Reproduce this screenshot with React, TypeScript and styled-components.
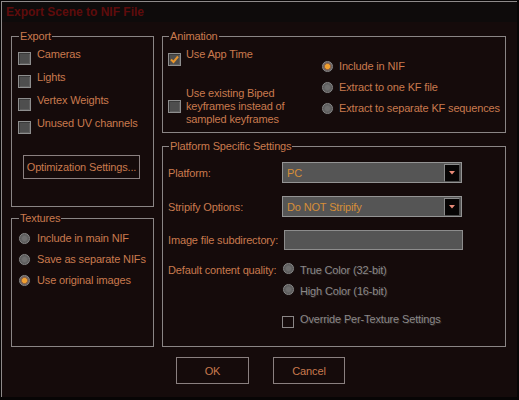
import React from "react";
import styled, { createGlobalStyle, css } from "styled-components";

const GlobalStyle = createGlobalStyle`
  html, body { margin: 0; padding: 0; background: #070505; }
  body { font-family: "Liberation Sans", Arial, sans-serif; font-size: 11px; }
`;

const TEXT = "#c97a4e";
const LINE = "#8a8585";

const Window = styled.div`
  width: 515px;
  height: 395px;
  margin: 1px 0 0 1px;
  border-top: 1px solid #8e8a8a;
  border-left: 1px solid #8e8a8a;
  background: #150b0b;
  display: flex;
  flex-direction: column;
`;

const TitleBar = styled.div`
  height: 20px;
  background: #0e0b0b;
  display: flex;
  align-items: center;
  padding-left: 4px;
  font-weight: bold;
  font-size: 12px;
  color: #5e0c0c;
`;

const Body = styled.div`
  display: flex;
  gap: 8px;
  padding: 8px 0 0 9px;
`;

const Column = styled.div<{ $w: number; $gap: number }>`
  width: ${(p) => p.$w}px;
  display: flex;
  flex-direction: column;
  gap: ${(p) => p.$gap}px;
`;

const Group = styled.fieldset<{ $h: number; $pt: number; $pl: number }>`
  box-sizing: border-box;
  height: ${(p) => p.$h}px;
  margin: 0;
  padding: ${(p) => p.$pt}px 0 0 ${(p) => p.$pl}px;
  border: 1px solid ${LINE};
  min-width: 0;
`;

const Legend = styled.legend`
  margin-left: 1px;
  padding: 0 1px;
  line-height: 13px;
  height: 13px;
  color: ${TEXT};
  letter-spacing: -0.15px;
`;

const Text = styled.span<{ $disabled?: boolean }>`
  line-height: 14px;
  color: ${(p) => (p.$disabled ? "#8c8888" : TEXT)};
  letter-spacing: -0.15px;
  white-space: nowrap;
  ${(p) =>
    p.$disabled &&
    css`
      text-shadow: 1px 1px 0 #2c2626;
    `}
`;

const MultiText = styled.span`
  line-height: 13px;
  color: ${TEXT};
  letter-spacing: -0.15px;
`;

const CheckRow = styled.div<{ $h?: number; $gap?: number; $mt?: number }>`
  display: flex;
  align-items: flex-start;
  height: ${(p) => (p.$h ? `${p.$h}px` : "auto")};
  gap: ${(p) => p.$gap ?? 6}px;
  margin-top: ${(p) => p.$mt ?? 0}px;
`;

const CenterRow = styled.div<{ $mt?: number }>`
  display: flex;
  align-items: center;
  gap: 5px;
  margin-top: ${(p) => p.$mt ?? 0}px;
`;

const Box = styled.div<{ $mt?: number; $outline?: boolean; $size?: number }>`
  box-sizing: border-box;
  flex: none;
  width: ${(p) => p.$size ?? 13}px;
  height: ${(p) => p.$size ?? 13}px;
  margin-top: ${(p) => p.$mt ?? 0}px;
  display: flex;
  align-items: center;
  justify-content: center;
  ${(p) =>
    p.$outline
      ? css`
          border: 1px solid #8a8686;
          background: transparent;
        `
      : css`
          border: 1px solid #8e8e8e;
          background: #4e4e4e;
          box-shadow: inset 1px 1px 0 #3a3a3a, inset -1px -1px 0 #5e5e5e;
        `}
`;

const RadioDot = styled.div<{ $on?: boolean; $mt?: number; $ml?: number }>`
  box-sizing: border-box;
  flex: none;
  width: 11px;
  height: 11px;
  border-radius: 50%;
  margin-top: ${(p) => p.$mt ?? 0}px;
  margin-left: ${(p) => p.$ml ?? 0}px;
  border: 1px solid #8a8a8a;
  background: ${(p) =>
    p.$on
      ? "radial-gradient(circle, #f0a030 0 2.2px, #a06a3a 2.8px, #6a6060 4px)"
      : "radial-gradient(circle, #6e6e6e 0 2px, #5a5a5a 4px)"};
  box-shadow: 0 0 1px #3a3a3a;
`;

const Rows = styled.div<{ $rowH: number }>`
  display: flex;
  flex-direction: column;
  & > * {
    height: ${(p) => p.$rowH}px;
  }
`;

const WinButton = styled.div<{ $w: number; $h: number; $ml?: number; $mt?: number }>`
  box-sizing: border-box;
  width: ${(p) => p.$w}px;
  height: ${(p) => p.$h}px;
  margin-left: ${(p) => p.$ml ?? 0}px;
  margin-top: ${(p) => p.$mt ?? 0}px;
  border: 1px solid #8a8080;
  display: flex;
  align-items: center;
  justify-content: center;
  color: ${TEXT};
  letter-spacing: -0.15px;
  white-space: nowrap;
`;

const AnimGrid = styled.div`
  display: grid;
  grid-template-columns: 154px 1fr;
`;

const LeftStack = styled.div`
  display: flex;
  flex-direction: column;
`;

const RightStack = styled.div`
  display: flex;
  flex-direction: column;
  padding-top: 12px;
`;

const FormRow = styled.div<{ $h?: number; $mt?: number; $align?: string }>`
  display: flex;
  align-items: ${(p) => p.$align ?? "center"};
  height: ${(p) => (p.$h ? `${p.$h}px` : "auto")};
  margin-top: ${(p) => p.$mt ?? 0}px;
`;

const FieldLabel = styled.div`
  width: 114px;
  flex: none;
  color: ${TEXT};
  line-height: 14px;
  letter-spacing: -0.15px;
  white-space: nowrap;
`;

const Select = styled.div`
  box-sizing: border-box;
  width: 180px;
  height: 21px;
  border: 1px solid #949494;
  background: #555555;
  display: flex;
  align-items: center;
  justify-content: space-between;
  padding: 0 1px 0 4px;
  color: #d58e38;
  letter-spacing: -0.15px;
`;

const SelectArrow = styled.div`
  box-sizing: border-box;
  width: 16px;
  height: 18px;
  background: #060404;
  border-top: 1px solid #8a8a8a;
  border-left: 1px solid #8a8a8a;
  border-right: 1px solid #4a4a4a;
  border-bottom: 1px solid #4a4a4a;
  display: flex;
  align-items: center;
  justify-content: center;
`;

const TextInput = styled.div`
  box-sizing: border-box;
  width: 179px;
  height: 20px;
  margin-left: 2px;
  border: 1px solid #8c8c8c;
  background: #545454;
`;

const QualityStack = styled.div`
  display: flex;
  flex-direction: column;
  margin-left: 1px;
`;

const Footer = styled.div`
  display: flex;
  gap: 24px;
  padding: 10px 0 0 174px;
`;

const Check = () => (
  <svg width="9" height="9" viewBox="0 0 9 9">
    <path d="M1 4.5 L3.5 7 L8 1.5" fill="none" stroke="#e8952c" strokeWidth="2" />
  </svg>
);

const Arrow = () => (
  <svg width="6" height="4" viewBox="0 0 6 4">
    <path d="M0 0 H6 L3 3.5 Z" fill="#e88a78" />
  </svg>
);

const exportItems = ["Cameras", "Lights", "Vertex Weights", "Unused UV channels"];
const textureItems = [
  { label: "Include in main NIF", on: false },
  { label: "Save as separate NIFs", on: false },
  { label: "Use original images", on: true },
];
const animRadios = [
  { label: "Include in NIF", on: true },
  { label: "Extract to one KF file", on: false },
  { label: "Extract to separate KF sequences", on: false },
];

export default function App() {
  return (
    <>
      <GlobalStyle />
      <Window>
        <TitleBar>Export Scene to NIF File</TitleBar>
        <Body>
          <Column $w={143} $gap={5}>
            <Group $h={177} $pt={4} $pl={6}>
              <Legend>Export</Legend>
              <Rows $rowH={23}>
                {exportItems.map((t) => (
                  <CheckRow key={t}>
                    <Box $mt={5} />
                    <Text>{t}</Text>
                  </CheckRow>
                ))}
              </Rows>
              <WinButton $w={117} $h={24} $ml={5} $mt={16}>
                Optimization Settings...
              </WinButton>
            </Group>
            <Group $h={135} $pt={6} $pl={6}>
              <Legend>Textures</Legend>
              <Rows $rowH={21}>
                {textureItems.map((t) => (
                  <CheckRow key={t.label} $gap={7}>
                    <RadioDot $on={t.on} $mt={2} $ml={1} />
                    <Text>{t.label}</Text>
                  </CheckRow>
                ))}
              </Rows>
            </Group>
          </Column>
          <Column $w={344} $gap={7}>
            <Group $h={103} $pt={4} $pl={5}>
              <Legend>Animation</Legend>
              <AnimGrid>
                <LeftStack>
                  <CheckRow $gap={5}>
                    <Box $mt={6}>
                      <Check />
                    </Box>
                    <Text>Use App Time</Text>
                  </CheckRow>
                  <CenterRow $mt={21}>
                    <Box />
                    <MultiText>
                      Use existing Biped
                      <br />
                      keyframes instead of
                      <br />
                      sampled keyframes
                    </MultiText>
                  </CenterRow>
                </LeftStack>
                <RightStack>
                  <Rows $rowH={21}>
                    {animRadios.map((r) => (
                      <CheckRow key={r.label} $gap={6}>
                        <RadioDot $on={r.on} $mt={2} />
                        <Text>{r.label}</Text>
                      </CheckRow>
                    ))}
                  </Rows>
                </RightStack>
              </AnimGrid>
            </Group>
            <Group $h={207} $pt={9} $pl={5}>
              <Legend>Platform Specific Settings</Legend>
              <FormRow $h={21}>
                <FieldLabel>Platform:</FieldLabel>
                <Select>
                  <span>PC</span>
                  <SelectArrow>
                    <Arrow />
                  </SelectArrow>
                </Select>
              </FormRow>
              <FormRow $h={21} $mt={13}>
                <FieldLabel>Stripify Options:</FieldLabel>
                <Select>
                  <span>Do NOT Stripify</span>
                  <SelectArrow>
                    <Arrow />
                  </SelectArrow>
                </Select>
              </FormRow>
              <FormRow $h={20} $mt={13}>
                <FieldLabel>Image file subdirectory:</FieldLabel>
                <TextInput />
              </FormRow>
              <FormRow $mt={13} $align="flex-start">
                <FieldLabel>Default content quality:</FieldLabel>
                <QualityStack>
                  <Rows $rowH={21}>
                    <CheckRow $gap={6}>
                      <RadioDot />
                      <Text $disabled>True Color (32-bit)</Text>
                    </CheckRow>
                    <CheckRow $gap={6}>
                      <RadioDot />
                      <Text $disabled>High Color (16-bit)</Text>
                    </CheckRow>
                  </Rows>
                </QualityStack>
              </FormRow>
              <FormRow $mt={7} $align="flex-start">
                <FieldLabel />
                <CheckRow $gap={6}>
                  <Box $outline $size={12} $mt={4} />
                  <Text $disabled>Override Per-Texture Settings</Text>
                </CheckRow>
              </FormRow>
            </Group>
          </Column>
        </Body>
        <Footer>
          <WinButton $w={73} $h={27}>
            OK
          </WinButton>
          <WinButton $w={72} $h={27}>
            Cancel
          </WinButton>
        </Footer>
      </Window>
    </>
  );
}
